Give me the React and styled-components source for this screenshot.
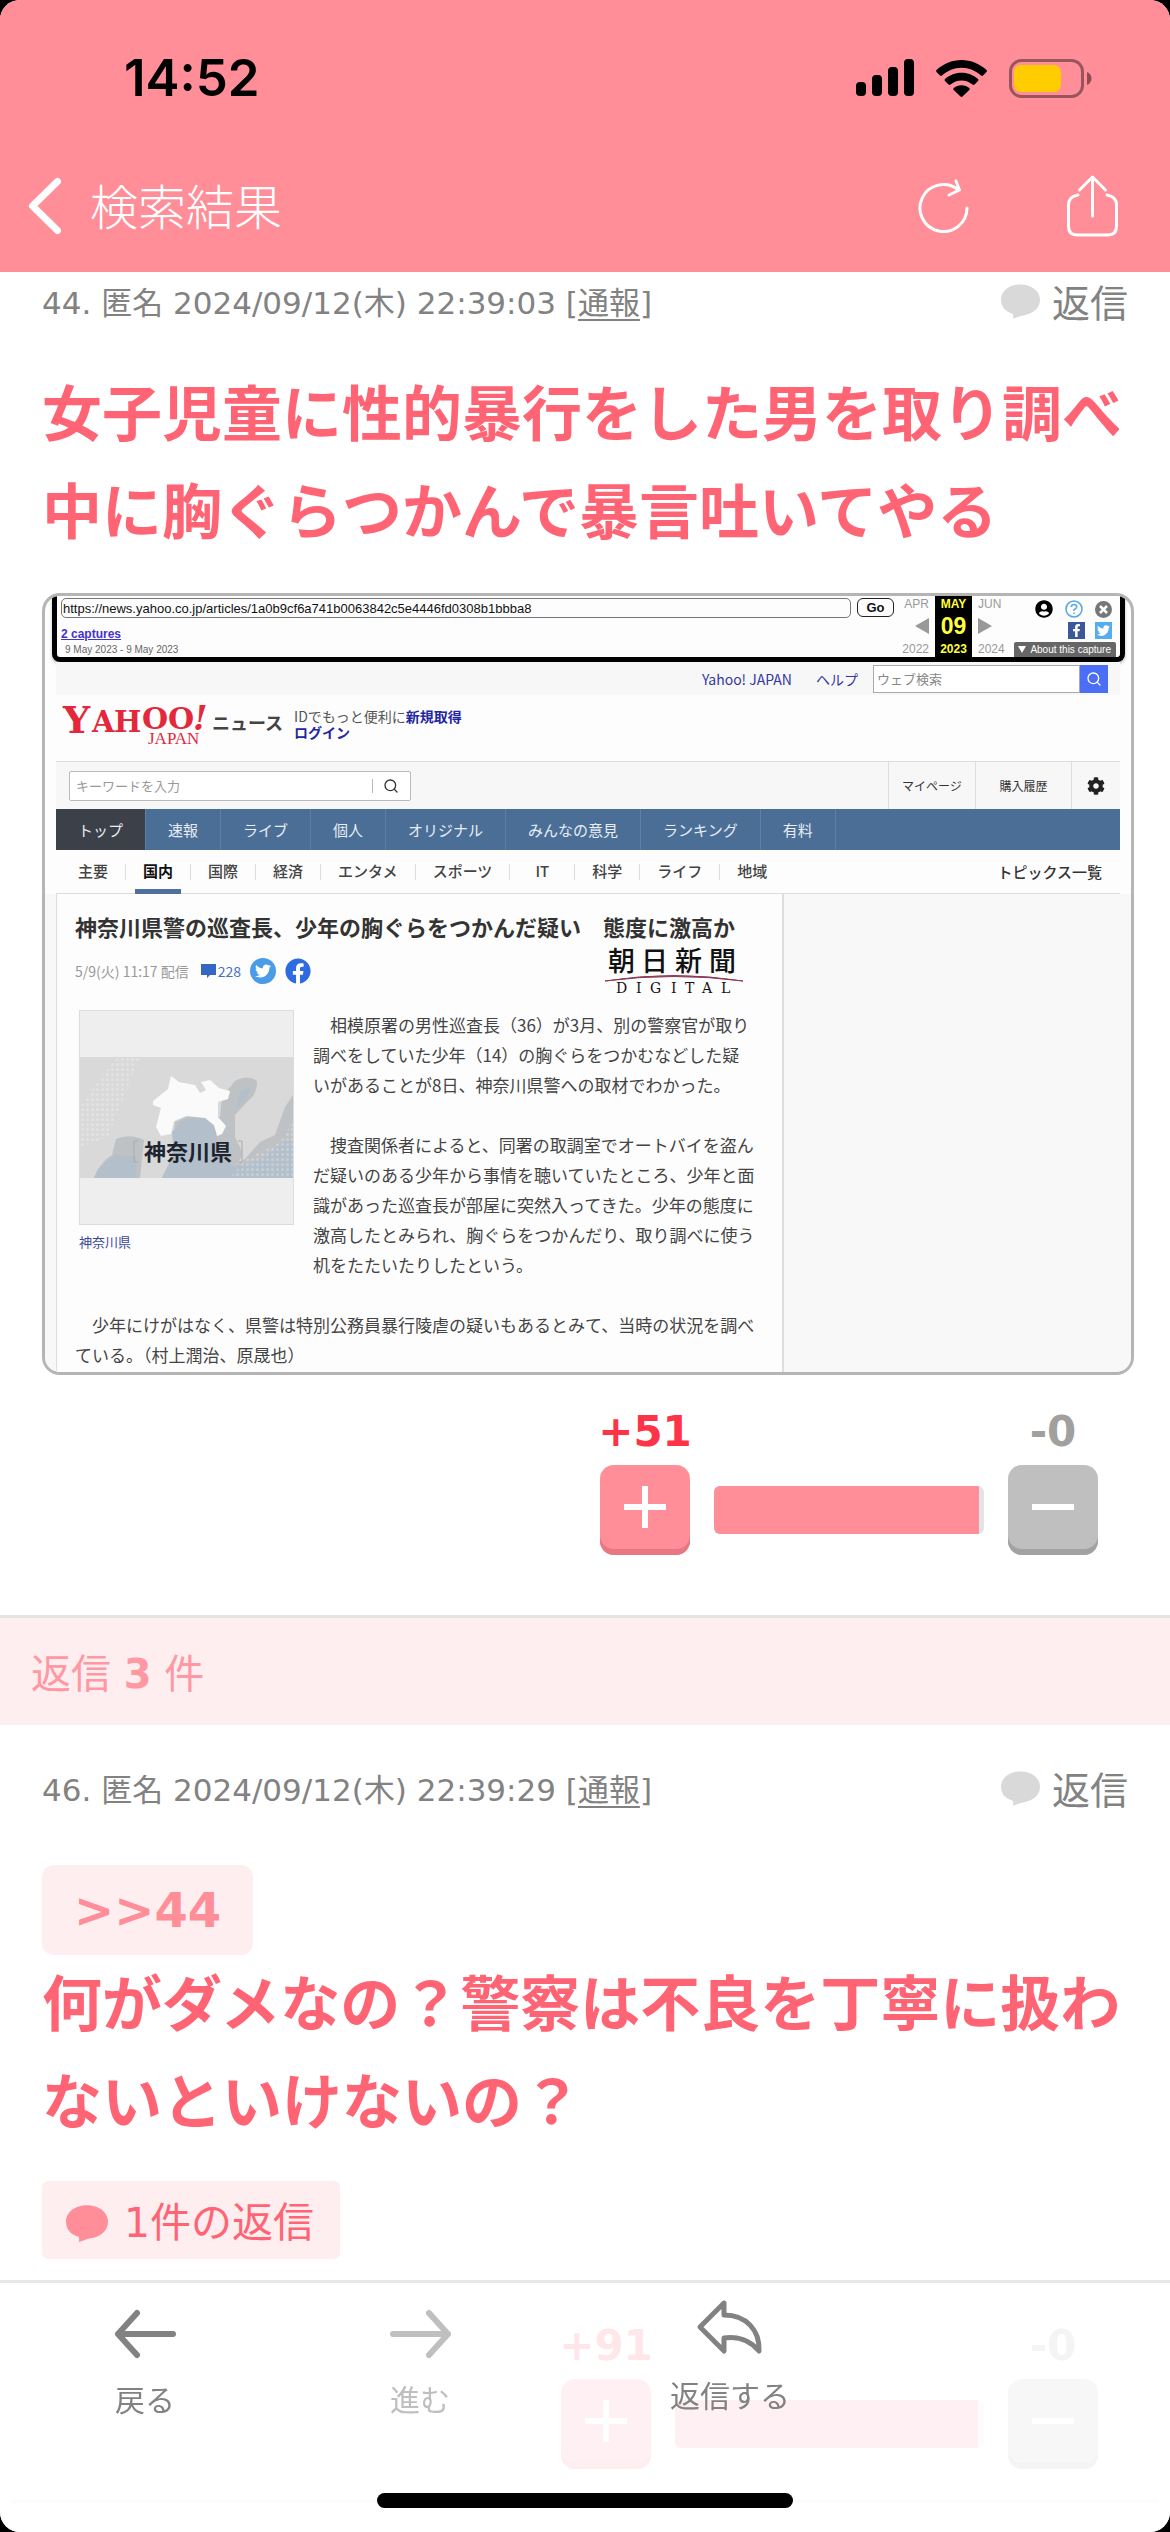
import React from "react";
import styled, { createGlobalStyle } from "styled-components";
import { FaTwitter, FaFacebookF, FaFacebook, FaCog, FaUserCircle } from "react-icons/fa";
import { FiSearch } from "react-icons/fi";

const jp = `"Noto Sans CJK JP", sans-serif`;
const verdana = `"DejaVu Sans", "Noto Sans CJK JP", sans-serif`;
const arial = `"Liberation Sans", "Noto Sans CJK JP", sans-serif`;

const Global = createGlobalStyle`
  * { box-sizing: border-box; }
  body { margin: 0; background: #000; font-family: ${verdana}; }
  button, input { font: inherit; margin: 0; padding: 0; border: 0; background: none; color: inherit; }
  button { cursor: pointer; }
  a { color: inherit; text-decoration: none; }
  h1, h2, p, figure { margin: 0; font: inherit; }
  svg { display: block; flex: none; overflow: visible; }
`;

const Screen = styled.div`
  min-height: 100vh;
  background: #fff;
  border-radius: 20px;
  overflow: hidden;
`;

/* ---------- header ---------- */
const Header = styled.header`
  height: 272px;
  background: #ff8e99;
  display: flex;
  flex-direction: column;
`;
const StatusBar = styled.div`
  display: flex;
  align-items: center;
  justify-content: space-between;
  height: 156px;
  padding: 0 78px 0 124px;
`;
const Clock = styled.span`
  font: 600 51px/60px Inter, sans-serif;
  color: #000;
`;
const StatusIcons = styled.div`
  display: flex;
  align-items: center;
  gap: 22px;
`;
const NavBar = styled.div`
  display: flex;
  align-items: center;
  height: 100px;
  padding: 0 52px 0 28px;
  color: #fff;
`;
const BackButton = styled.button`
  display: flex;
  align-items: center;
`;
const NavTitle = styled.h1`
  flex: 1;
  font: 300 48px/60px ${jp};
  margin-left: 28px;
  padding-bottom: 4px;
`;
const NavActions = styled.div`
  display: flex;
  align-items: center;
  gap: 98px;
`;

/* ---------- posts ---------- */
const Post = styled.article`
  padding: ${(p) => (p.$first ? "0 36px 60px 42px" : "34px 36px 31px 42px")};
`;
const Meta = styled.div`
  display: flex;
  align-items: center;
  justify-content: space-between;
  height: 62px;
  padding-right: 6px;
  font-size: 31px;
  line-height: 40px;
  color: #828282;
`;
const Report = styled.a`
  text-decoration: underline;
  text-underline-offset: 5px;
  text-decoration-thickness: 2px;
`;
const ReplyButton = styled.button`
  display: flex;
  align-items: center;
  gap: 12px;
  padding-bottom: 4px;
  font: 400 38px/50px ${jp};
`;
const PostText = styled.p`
  margin-top: ${(p) => (p.$spaced ? "27px" : "-4px")};
  font: 700 60px/98px ${jp};
  color: #ff6475;
`;
const Quote = styled.a`
  display: flex;
  align-items: center;
  width: fit-content;
  height: 90px;
  margin-top: 44px;
  padding: 0 32px;
  border-radius: 12px;
  background: #ffeef0;
  color: #ff8e99;
  font-size: 48px;
  line-height: 60px;
  font-weight: 700;
`;
const RepliesChip = styled.button`
  display: flex;
  align-items: center;
  gap: 16px;
  height: 78px;
  margin-top: 34px;
  padding: 6px 26px 0 24px;
  border-radius: 6px;
  background: #ffeef0;
  color: #ff6475;
  font-size: 41px;
  line-height: 60px;
`;
const Votes = styled.div`
  display: flex;
  justify-content: flex-end;
  align-items: flex-end;
  gap: 24px;
  margin-top: ${(p) => p.$top}px;
  padding-right: 36px;
`;
const Vote = styled.div`
  display: flex;
  flex-direction: column;
  align-items: center;
  gap: 8px;
  width: 90px;
  font-size: 42px;
  line-height: 50px;
  font-weight: 700;
  color: ${(p) => p.$color};
`;
const VoteButton = styled.button`
  display: flex;
  justify-content: center;
  align-items: center;
  width: 90px;
  height: 90px;
  padding-bottom: 6px;
  border-radius: 14px;
  background: ${(p) => (p.$up ? "#ff8e99" : "#bfbfbf")};
  box-shadow: inset 0 -6px 0 ${(p) => (p.$up ? "#e87784" : "#a2a2a2")};
`;
const Meter = styled.div`
  width: ${(p) => p.$width}px;
  height: 48px;
  margin-bottom: 21px;
  border-radius: 6px;
  overflow: hidden;
  background: #e3e3e3;
`;
const MeterFill = styled.div`
  width: 98%;
  height: 100%;
  background: #ff8e99;
`;
const ReplyBand = styled.h2`
  height: 110px;
  padding: 2px 31px 0;
  border-top: 3px solid #e4e4e4;
  background: #ffeef0;
  color: #ff98a3;
  font-size: 40px;
  line-height: 108px;
`;
const PostDivider = styled.div`
  height: 3px;
  margin: 0 12px;
  background: #e4e4e4;
`;

/* ---------- attached capture ---------- */
const Capture = styled.figure`
  margin-top: 36px;
  height: 782px;
  border: 3px solid #b5b5b5;
  border-radius: 18px;
  overflow: hidden;
  background: #fdfdfd;
  font-family: ${jp};
  white-space: nowrap;
  color: #333;
`;
const ArchiveBar = styled.div`
  display: flex;
  height: 66px;
  margin: 0 6px 0 7px;
  padding-left: 4px;
  border: solid #000;
  border-width: 0 5px 5px;
  border-radius: 0 0 8px 8px;
  box-shadow: 0 2px 3px #8888;
  background: #fdfdfd;
  font-family: ${arial};
`;
const ArchiveMain = styled.div`
  flex: 1;
  display: flex;
  flex-direction: column;
  align-items: flex-start;
  padding-top: 2px;
`;
const UrlInput = styled.input`
  && {
    width: 100%;
    height: 20px;
    padding: 0 1px;
    border: 1px solid #777;
    border-radius: 5px;
    font-size: 13px;
    color: #111;
  }
`;
const CapturesLink = styled.a`
  margin-top: 8px;
  font-size: 12px;
  line-height: 16px;
  font-weight: 700;
  color: #4433cc;
  text-decoration: underline;
`;
const CaptureDates = styled.span`
  margin: 2px 0 0 4px;
  font-size: 10px;
  line-height: 12px;
  color: #666;
`;
const GoButton = styled.button`
  && {
    width: 37px;
    height: 19px;
    margin: 2px 4px 0 6px;
    border: 1px solid #222;
    border-radius: 6px;
    font-size: 13px;
    line-height: 17px;
    font-weight: 700;
    color: #111;
  }
`;
const DateGrid = styled.div`
  display: grid;
  grid-template-columns: 31px 37px 30px;
  grid-template-rows: 16px 28px 17px;
  column-gap: 6px;
  align-items: center;
  font-size: 12px;
  line-height: 16px;
  color: #999;
`;
const DateCell = styled.span`
  display: flex;
  justify-content: ${(p) => p.$side || "flex-start"};
`;
const DateNow = styled.span`
  display: grid;
  place-items: center;
  height: 100%;
  background: #000;
  color: #ffff3c;
  font-size: ${(p) => (p.$big ? 23 : 12)}px;
  font-weight: 700;
`;
const ArchiveTools = styled.div`
  display: flex;
  flex-direction: column;
  justify-content: space-between;
  align-items: flex-end;
  width: 112px;
  padding: 4px 4px 0 2px;
`;
const ToolRow = styled.div`
  display: flex;
  align-items: center;
  gap: ${(p) => p.$gap}px;
  padding-right: 4px;
`;
const SocialTile = styled.span`
  display: grid;
  place-items: center;
  width: 17px;
  height: 17px;
  color: #fff;
  background: ${(p) => p.$bg};
`;
const About = styled.button`
  && {
    display: flex;
    align-items: center;
    gap: 4px;
    height: 15px;
    padding: 0 5px 0 4px;
    border-radius: 2px 2px 0 0;
    background: #666;
    color: #fff;
    font-size: 10px;
    line-height: 15px;
  }
`;
const Site = styled.div`
  margin: 0 11px;
`;
const TopLinks = styled.div`
  display: flex;
  align-items: center;
  justify-content: flex-end;
  gap: 24px;
  height: 33px;
  padding: 0 12px 0 0;
  background: #f7f7f7;
  color: #3438a0;
  font-size: 14px;
  line-height: 20px;
`;
const WebSearch = styled.form`
  display: flex;
  width: 235px;
  height: 28px;
  margin-left: -9px;
`;
const WebInput = styled.input`
  && {
    flex: 1;
    min-width: 0;
    padding: 0 3px;
    border: 1px solid #aaa;
    font-size: 13px;
    background: #fff;
  }
  &::placeholder { color: #888; opacity: 1; }
`;
const WebButton = styled.button`
  && {
    display: grid;
    place-items: center;
    width: 28px;
    background: #4a6ef5;
    color: #fff;
  }
`;
const Brand = styled.div`
  display: flex;
  align-items: flex-start;
  height: 66px;
  padding: 10px 5px;
`;
const BrandName = styled.span`
  margin: 4px 11px 0 4px;
  font-size: 18px;
  line-height: 26px;
  font-weight: 700;
  color: #444;
`;
const Login = styled.div`
  padding-top: 3px;
  font-size: 14px;
  line-height: 16px;
  color: #555;
  a { font-weight: 700; color: #2226a0; }
`;
const SearchRow = styled.div`
  display: flex;
  align-items: center;
  height: 48px;
  padding-left: 13px;
  border-top: 1px solid #ddd;
  background: #f7f7f7;
`;
const Keyword = styled.label`
  display: flex;
  align-items: center;
  gap: 10px;
  width: 342px;
  height: 30px;
  margin-right: auto;
  padding: 0 11px 0 6px;
  border: 1px solid #bbb;
  border-radius: 2px;
  background: #fff;
  color: #333;
  input {
    flex: 1;
    min-width: 0;
    font-size: 13px;
    height: 14px;
    border-right: 1px solid #bbb;
  }
  input::placeholder { color: #999; opacity: 1; }
`;
const UserCell = styled.a`
  display: grid;
  place-items: center;
  width: ${(p) => p.$width}px;
  height: 100%;
  border-left: 1px solid #ddd;
  font-size: 12px;
`;
const MainNav = styled.nav`
  display: flex;
  height: 41px;
  background: #4b6e97;
  color: #e6edf4;
  font-size: 15px;
  line-height: 41px;
`;
const MainTab = styled.a`
  padding: 0 22px;
  border-right: 1px solid #5f7fa6;
  background: ${(p) => (p.$active ? "#3b4049" : "none")};
`;
const SubNav = styled.nav`
  display: flex;
  align-items: center;
  height: 44px;
  padding: 0 18px 0 5px;
  border-bottom: 1px solid #ddd;
  font-size: 15px;
  line-height: 42px;
`;
const SubTab = styled.a`
  display: flex;
  align-items: center;
  height: 44px;
  padding-left: 9px;
  font-weight: ${(p) => (p.$active ? 700 : 500)};
  color: ${(p) => (p.$active ? "#111" : "#444")};
  span {
    min-width: 46px;
    height: 44px;
    padding: 0 8px;
    text-align: center;
    border-bottom: ${(p) => (p.$active ? "5px solid #4f709b" : "none")};
  }
  &::after {
    content: "";
    width: 1px;
    height: 16px;
    margin-left: 9px;
    background: ${(p) => (p.$last ? "none" : "#ddd")};
  }
`;
const AllTopics = styled.a`
  margin-left: auto;
  color: #333;
  font-weight: 500;
`;
const Body = styled.div`
  height: 500px;
  padding: 0 347px 0 11px;
  background: #f8f8f8;
`;
const Story = styled.div`
  height: 100%;
  padding: 17px 0 0 18px;
  border: solid #ddd;
  border-width: 0 2px 0 1px;
  background: #fdfdfd;
`;
const Headline = styled.h2`
  font-size: 22px;
  line-height: 30px;
  font-weight: 700;
`;
const Byline = styled.div`
  display: flex;
  align-items: center;
  height: 45px;
  margin-top: 7px;
  padding-right: 38px;
  font-size: 14px;
  line-height: 20px;
  color: #999;
`;
const CommentCount = styled.a`
  display: flex;
  align-items: center;
  gap: 2px;
  margin: 0 9px 0 12px;
  color: #4a6fc0;
`;
const Round = styled.span`
  display: grid;
  place-items: center;
  width: 26px;
  height: 26px;
  margin-right: 9px;
  border-radius: 50%;
  color: #fff;
  background: ${(p) => p.$bg};
`;
const Publisher = styled.div`
  display: flex;
  flex-direction: column;
  align-items: center;
  margin-left: auto;
  color: #111;
`;
const StoryRow = styled.div`
  display: flex;
  gap: 19px;
  padding: 17px 0 0 4px;
`;
const Thumb = styled.div`
  width: 215px;
  height: 215px;
  padding: 46px 0;
  border: 1px solid #ddd;
  background: #eee;
`;
const Caption = styled.p`
  margin-top: 7px;
  font-size: 13px;
  line-height: 20px;
  color: #3c4a9c;
`;
const StoryText = styled.p`
  font-size: 17px;
  line-height: 30px;
  color: #444;
  white-space: pre;
`;

/* ---------- bottom bar ---------- */
const TabBar = styled.nav`
  position: fixed;
  left: 0;
  right: 0;
  bottom: 0;
  display: flex;
  flex-direction: column;
  align-items: center;
  justify-content: space-between;
  height: 252px;
  padding-bottom: 24px;
  border-top: 3px solid #e7e7e7;
  border-radius: 0 0 20px 20px;
  background: rgba(255, 255, 255, 0.88);
`;
const Tabs = styled.div`
  display: grid;
  grid-template-columns: 290fr 260fr 360fr 260fr;
  width: 100%;
  padding-top: 17px;
`;
const Tab = styled.button`
  display: flex;
  flex-direction: column;
  align-items: center;
  gap: 20px;
  && { padding-top: ${(p) => (p.$arrow ? 10 : 0)}px; }
  font: 400 30px/40px ${jp};
  color: #828282;
  &:disabled { color: #bfbfbf; }
`;
const HomeIndicator = styled.div`
  width: 416px;
  height: 15px;
  border-radius: 8px;
  background: #000;
`;

/* ---------- drawings ---------- */
const Bubble = ({ w, h, color }) => (
  <svg width={w} height={h} viewBox="0 0 40 35" fill={color} aria-hidden="true">
    <path d="M20 0C31 0 40 6.500 40 15.500S33 30 24 31.500C19 32 17 34 12 35C13 33 12.500 31.500 12 30C4 28 0 22.500 0 15.500C0 6.500 9 0 20 0Z" />
  </svg>
);

const Signal = () => (
  <svg width="58" height="38" viewBox="0 0 58 38">
    <rect x="0" y="23" width="10" height="14" rx="4" />
    <rect x="16" y="16" width="10" height="21" rx="4" />
    <rect x="32" y="8" width="10" height="29" rx="4" />
    <rect x="48" y="0" width="10" height="37" rx="4" />
  </svg>
);

const Wifi = () => (
  <svg width="51" height="37" viewBox="0 0 51 37">
    <path d="M25.500 0C35 0 44 4 50.500 10Q51.500 11 50.500 12L47 15.500Q46 16.300 45 15.500C39.500 10.500 33 7.700 25.500 7.700S11.500 10.500 6 15.500Q5 16.300 4 15.500L.5 12Q-.5 11 .5 10C7 4 16 0 25.500 0Z" />
    <path d="M25.500 12.700C32 12.700 38 15.200 42 19Q43 20 42 21L38.500 24.500Q37.500 25.300 36.500 24.500C33.500 22 29.700 20.400 25.500 20.400S17.500 22 14.500 24.500Q13.500 25.300 12.500 24.500L9 21Q8 20 9 19C13 15.200 19 12.700 25.500 12.700Z" />
    <path d="M25.500 25.300C28.500 25.300 31.500 26.500 33.300 28Q34.300 29 33.300 30L26.500 36.500Q25.500 37.300 24.500 36.500L17.700 30Q16.700 29 17.700 28C19.500 26.500 22.500 25.300 25.500 25.300Z" />
  </svg>
);

const Battery = () => (
  <svg width="83" height="39" viewBox="0 0 83 39">
    <rect x="1.500" y="1.500" width="72" height="36" rx="11" fill="none" stroke="#000" strokeOpacity=".4" strokeWidth="3" />
    <path d="M78 13c3 1 4.500 4 4.500 6.500s-1.500 5.500-4.500 6.500z" fillOpacity=".45" />
    <rect x="5" y="6" width="47" height="27" rx="7" fill="#ffcc00" />
  </svg>
);

const Chevron = () => (
  <svg width="34" height="58" viewBox="0 0 34 58" fill="none" stroke="#fff" strokeWidth="7" strokeLinecap="round" strokeLinejoin="round">
    <path d="M29.500 4.500L4.500 29L29.500 53.500" />
  </svg>
);

const Refresh = () => (
  <svg width="50" height="54" viewBox="0 0 50 54" fill="none" stroke="#fff" strokeWidth="3" strokeLinecap="round" strokeLinejoin="round">
    <path d="M48 29A23.500 23.500 0 1 1 39 10.500M37 2L40.500 11L30 16" />
  </svg>
);

const Share = () => (
  <svg width="51" height="62" viewBox="0 0 51 62" fill="none" stroke="#fff" strokeWidth="3" strokeLinecap="round" strokeLinejoin="round">
    <path d="M11 20C5 21 1.500 24 1.500 30V51Q1.500 60 10.500 60H40.500Q49.500 60 49.500 51V30C49.500 24 46 21 40 20M25.500 41V2M12.500 15L25.500 2L38.500 15" />
  </svg>
);

const Plus = () => (
  <svg width="42" height="42" viewBox="0 0 42 42" fill="#fff"><path d="M18 0h6v18h18v6H24v18h-6V24H0v-6h18z" /></svg>
);
const Minus = () => (
  <svg width="42" height="42" viewBox="0 0 42 42" fill="#fff"><path d="M0 18h42v6H0z" /></svg>
);

const Arrow = ({ right }) => (
  <svg width="61" height="48" viewBox="0 0 61 48" fill="none" stroke="currentColor" strokeWidth="6" strokeLinecap="round" strokeLinejoin="round">
    <path d={right ? "M3 24H58M39 3L58 24L39 45" : "M58 24H3M22 3L3 24L22 45"} />
  </svg>
);

const ReplyArrow = () => (
  <svg width="66" height="54" viewBox="0 0 66 54" fill="none" stroke="currentColor" strokeWidth="5" strokeLinejoin="round">
    <path d="M27 3L3 27L27 51V38C40 36 53 40 62 51C63 30 49 15 27 15Z" />
  </svg>
);

const YahooLogo = () => (
  <svg width="147" height="40" viewBox="0 0 147 40" fill="#e3283c" role="img" aria-label="YAHOO! JAPAN" fontFamily="DejaVu Serif, serif" fontWeight="700">
    <text x="2" y="28" fontSize="38">Y</text>
    <text x="31" y="27" fontSize="29">A</text>
    <text x="53" y="27" fontSize="29">H</text>
    <text x="81" y="24" fontSize="30">O</text>
    <text x="107" y="24" fontSize="30">O</text>
    <text x="132" y="25" fontSize="33" fontStyle="italic">!</text>
    <text x="87" y="39" fontSize="17" fontFamily="Liberation Serif, serif" fontWeight="400">JAPAN</text>
  </svg>
);

const AsahiLogo = () => (
  <svg width="140" height="46" viewBox="0 0 140 46" fill="#111" role="img" aria-label="朝日新聞 DIGITAL">
    <g fontFamily="Noto Sans CJK JP, sans-serif" fontSize="27" fontWeight="500">
      <text x="4" y="23">朝</text>
      <text x="37" y="23">日</text>
      <text x="71" y="23">新</text>
      <text x="105" y="23">聞</text>
    </g>
    <path d="M1 33Q70 22 139 33Q70 24 1 33Z" fill="#8c3a58" stroke="#8c3a58" />
    <g fontFamily="DejaVu Serif, serif" fontSize="14">
      <text x="12" y="45">D</text>
      <text x="32" y="45">I</text>
      <text x="46" y="45">G</text>
      <text x="67" y="45">I</text>
      <text x="81" y="45">T</text>
      <text x="98" y="45">A</text>
      <text x="117" y="45">L</text>
    </g>
  </svg>
);

const PrefectureMap = () => (
  <svg width="213" height="121" viewBox="0 0 213 121">
    <defs>
      <pattern id="dots" width="5" height="5" patternUnits="userSpaceOnUse">
        <circle cx="2.500" cy="2.500" r="1.500" fill="#fff" fillOpacity=".25" />
      </pattern>
    </defs>
    <rect width="213" height="121" fill="#d9d9d9" />
    <path d="M36 0H60L28 80L0 90V50Z" fill="url(#dots)" />
    <path d="M155 24Q168 17 177 24Q178 36 168 44L155 58V80L160 90Q165 100 155 108L165 102L180 85L195 78L205 50L213 38V121H14Q20 105 32 98L36 82Q50 76 64 83L60 121H82L92 100L95 65L115 56L140 60L142 40Z" fill="#bfc2c5" />
    <path d="M160 34l12-4-6 12-10 10zM105 62l20-2 12 14-2 24 20 12 30-10 20-16 8 0V121H82l12-24-2-22zM18 112l18-14 20 2v21H14z" fill="#b3bfca" />
    <path d="M150 121l15-18 35-18 13-20v56z" fill="url(#dots)" />
    <path d="M73 44L88 32L91 19L99 25L115 28L120 36L126 33L121 25L130 23L139 31L150 34L148 42L138 45V60L146 69L142 77L137 79L134 68L125 61L106 59L94 64L91 77L81 79L76 70L81 51L73 48Z" fill="#fafafa" />
    <g stroke="#aaa" strokeWidth="1" fill="none"><path d="M58 84h-4v21h4M158 84h4v21h-4" /></g>
    <text x="64" y="103" fontSize="22" fontWeight="700" fill="#1c2430" fontFamily="Noto Sans CJK JP, sans-serif">神奈川県</text>
  </svg>
);

const mainTabs = ["トップ", "速報", "ライブ", "個人", "オリジナル", "みんなの意見", "ランキング", "有料"];
const subTabs = ["主要", "国内", "国際", "経済", "エンタメ", "スポーツ", "IT", "科学", "ライフ", "地域"];

const lead = [
  "　相模原署の男性巡査長（36）が3月、別の警察官が取り",
  "調べをしていた少年（14）の胸ぐらをつかむなどした疑",
  "いがあることが8日、神奈川県警への取材でわかった。",
  "",
  "　捜査関係者によると、同署の取調室でオートバイを盗ん",
  "だ疑いのある少年から事情を聴いていたところ、少年と面",
  "識があった巡査長が部屋に突然入ってきた。少年の態度に",
  "激高したとみられ、胸ぐらをつかんだり、取り調べに使う",
  "机をたたいたりしたという。",
  "",
  "",
].join("\n");

const rest = [
  "　少年にけがはなく、県警は特別公務員暴行陵虐の疑いもあるとみて、当時の状況を調べ",
  "ている。（村上潤治、原晟也）",
].join("\n");

function NewsCapture() {
  return (
    <Capture>
      <ArchiveBar>
        <ArchiveMain>
          <UrlInput aria-label="URL" readOnly value="https://news.yahoo.co.jp/articles/1a0b9cf6a741b0063842c5e4446fd0308b1bbba8" />
          <CapturesLink href="#">2 captures</CapturesLink>
          <CaptureDates>9 May 2023 - 9 May 2023</CaptureDates>
        </ArchiveMain>
        <GoButton>Go</GoButton>
        <DateGrid>
          <DateCell $side="flex-end">APR</DateCell>
          <DateNow>MAY</DateNow>
          <DateCell>JUN</DateCell>
          <DateCell $side="flex-end"><svg width="14" height="16" fill="#999"><path d="M0 8L14 0V16Z" /></svg></DateCell>
          <DateNow $big>09</DateNow>
          <DateCell><svg width="14" height="16" fill="#999"><path d="M14 8L0 0V16Z" /></svg></DateCell>
          <DateCell $side="flex-end">2022</DateCell>
          <DateNow>2023</DateNow>
          <DateCell>2024</DateCell>
        </DateGrid>
        <ArchiveTools>
          <ToolRow $gap={12}>
            <FaUserCircle size={18} color="#000" />
            <svg width="18" height="18" viewBox="0 0 18 18" fill="none" stroke="#5aa9e6" strokeWidth="1.600">
              <circle cx="9" cy="9" r="8" />
              <path d="M6.300 7Q6.500 4.500 9 4.500T11.700 7Q11.700 8.300 9 9.800V11M9 12.500V14" />
            </svg>
            <svg width="17" height="17" viewBox="0 0 17 17"><circle cx="8.500" cy="8.500" r="8.500" fill="#777" /><path d="M5 5l7 7M12 5l-7 7" stroke="#fff" strokeWidth="2.500" /></svg>
          </ToolRow>
          <ToolRow $gap={10}>
            <SocialTile $bg="#3b5998"><FaFacebookF size={13} /></SocialTile>
            <SocialTile $bg="#55acee"><FaTwitter size={13} /></SocialTile>
          </ToolRow>
          <About>
            <svg width="8" height="7" fill="#fff"><path d="M0 0H8L4 7Z" /></svg>
            About this capture
          </About>
        </ArchiveTools>
      </ArchiveBar>
      <Site>
        <TopLinks>
          <a href="#">Yahoo! JAPAN</a>
          <a href="#">ヘルプ</a>
          <WebSearch>
            <WebInput aria-label="ウェブ検索" placeholder="ウェブ検索" />
            <WebButton type="button" aria-label="検索"><FiSearch size={16} /></WebButton>
          </WebSearch>
        </TopLinks>
        <Brand>
          <YahooLogo />
          <BrandName>ニュース</BrandName>
          <Login>
            IDでもっと便利に<a href="#">新規取得</a><br />
            <a href="#">ログイン</a>
          </Login>
        </Brand>
        <SearchRow>
          <Keyword>
            <input aria-label="キーワード" placeholder="キーワードを入力" />
            <FiSearch size={16} />
          </Keyword>
          <UserCell href="#" $width={87}>マイページ</UserCell>
          <UserCell href="#" $width={96}>購入履歴</UserCell>
          <UserCell href="#" $width={49} aria-label="設定"><FaCog size={18} color="#222" /></UserCell>
        </SearchRow>
        <MainNav>
          {mainTabs.map((t, i) => <MainTab href="#" key={t} $active={i === 0}>{t}</MainTab>)}
        </MainNav>
        <SubNav>
          {subTabs.map((t, i) => (
            <SubTab href="#" key={t} $active={i === 1} $last={i === subTabs.length - 1}><span>{t}</span></SubTab>
          ))}
          <AllTopics href="#">トピックス一覧</AllTopics>
        </SubNav>
      </Site>
      <Body>
        <Story>
          <Headline>神奈川県警の巡査長、少年の胸ぐらをつかんだ疑い　態度に激高か</Headline>
          <Byline>
            5/9(火) 11:17 配信
            <CommentCount href="#">
              <svg width="15" height="14" viewBox="0 0 15 14" fill="#3566c4"><path d="M0 0H15V11H9L6 14V11H0Z" /></svg>
              228
            </CommentCount>
            <Round $bg="#4a9be8"><FaTwitter size={16} /></Round>
            <FaFacebook size={26} color="#2f6be0" />
            <Publisher><AsahiLogo /></Publisher>
          </Byline>
          <StoryRow>
            <div>
              <Thumb><PrefectureMap /></Thumb>
              <Caption>神奈川県</Caption>
            </div>
            <StoryText>{lead}</StoryText>
          </StoryRow>
          <StoryText>{rest}</StoryText>
        </Story>
      </Body>
    </Capture>
  );
}

const PostMeta = ({ no, time }) => (
  <Meta>
    <span>{no}. 匿名 2024/09/12(木) {time} [<Report href="#">通報</Report>]</span>
    <ReplyButton><Bubble w={39} h={35} color="#d9d9d9" />返信</ReplyButton>
  </Meta>
);

const VoteRow = ({ plus, minus, width, top }) => (
  <Votes $top={top}>
    <Vote $color="#ff3347">+{plus}<VoteButton $up aria-label="プラス"><Plus /></VoteButton></Vote>
    <Meter $width={width}><MeterFill /></Meter>
    <Vote $color="#a0a0a0">-{minus}<VoteButton aria-label="マイナス"><Minus /></VoteButton></Vote>
  </Votes>
);

export default function App() {
  return (
    <>
      <Global />
      <Screen>
        <Header>
          <StatusBar>
            <Clock>14:52</Clock>
            <StatusIcons><Signal /><Wifi /><Battery /></StatusIcons>
          </StatusBar>
          <NavBar>
            <BackButton aria-label="戻る"><Chevron /></BackButton>
            <NavTitle>検索結果</NavTitle>
            <NavActions>
              <button aria-label="更新"><Refresh /></button>
              <button aria-label="共有"><Share /></button>
            </NavActions>
          </NavBar>
        </Header>
        <main>
          <Post $first>
            <PostMeta no={44} time="22:39:03" />
            <PostText $spaced>女子児童に性的暴行をした男を取り調べ中に胸ぐらつかんで暴言吐いてやる</PostText>
            <NewsCapture />
            <VoteRow plus={51} minus={0} width={270} top={32} />
          </Post>
          <ReplyBand>返信 <b>3</b> 件</ReplyBand>
          <Post>
            <PostMeta no={46} time="22:39:29" />
            <Quote href="#">&gt;&gt;44</Quote>
            <PostText>何がダメなの？警察は不良を丁寧に扱わないといけないの？</PostText>
            <RepliesChip><Bubble w={42} h={37} color="#ff8e99" />1件の返信</RepliesChip>
            <VoteRow plus={91} minus={0} width={309} top={62} />
          </Post>
          <PostDivider />
        </main>
        <TabBar>
          <Tabs>
            <Tab $arrow><Arrow />戻る</Tab>
            <Tab $arrow disabled><Arrow right />進む</Tab>
            <Tab><ReplyArrow />返信する</Tab>
          </Tabs>
          <HomeIndicator />
        </TabBar>
      </Screen>
    </>
  );
}
